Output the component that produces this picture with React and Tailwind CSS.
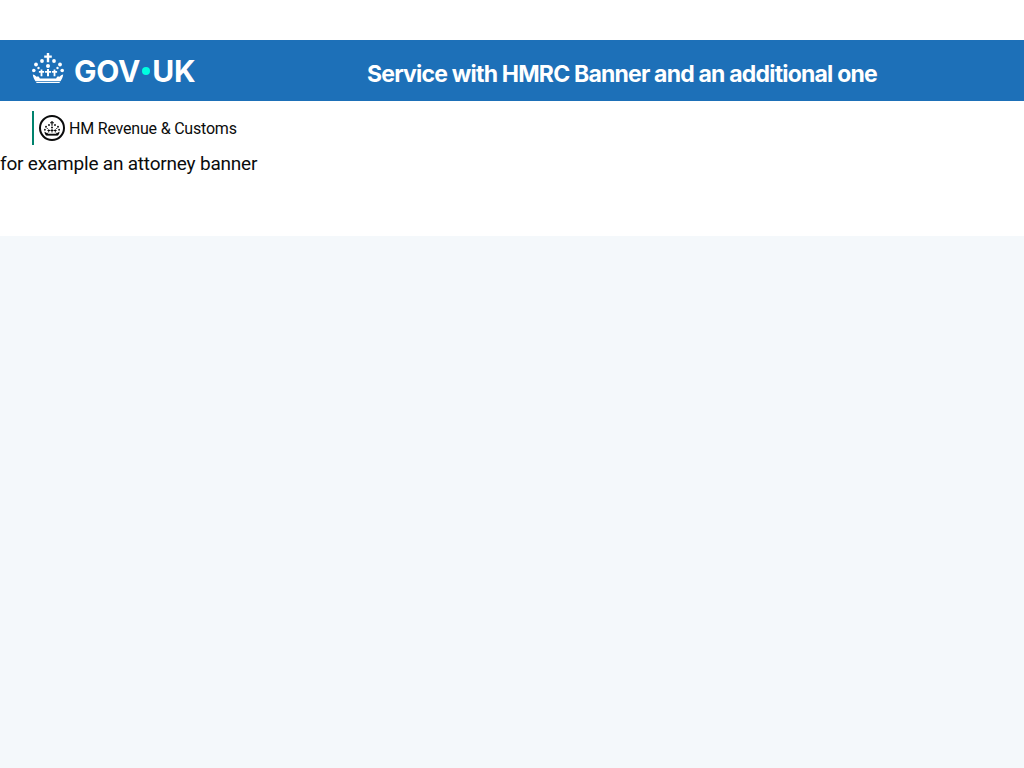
function Crown({ fill = "#fff", className }) {
  return (
    <svg viewBox="0 0 32 30" className={className} fill={fill} aria-hidden="true">
      <path d="M14.8 0h2.4v2.4h2.6v2.3h-2.6v4.6h-2.4V4.7h-2.6V2.4h2.6z" />
      <circle cx="16" cy="13" r="2" />
      <circle cx="10" cy="8" r="1.9" />
      <circle cx="22" cy="8" r="1.9" />
      <circle cx="4" cy="11.5" r="1.9" />
      <circle cx="28" cy="11.5" r="1.9" />
      <circle cx="1.8" cy="17.5" r="1.8" />
      <circle cx="30.2" cy="17.5" r="1.8" />
      <circle cx="6.5" cy="15" r="1.2" />
      <circle cx="25.5" cy="15" r="1.2" />
      <path d="M15 16h2v2h2v1.8h-2v3.4h-2v-3.4h-2V18h2z" />
      <path d="M8.6 16.5h1.8v1.6h1.7v1.7h-1.7v3.4H8.6v-3.4H6.9v-1.7h1.7z" />
      <path d="M21.6 16.5h1.8v1.6h1.7v1.7h-1.7v3.4h-1.8v-3.4h-1.7v-1.7h1.7z" />
      <path d="M0.8 21.5c1.4.2 2.8.9 3.6 2.3.8-.4 1.6-.6 2.5-.1l1 1.7h16.2l1-1.7c.9-.5 1.7-.3 2.5.1.8-1.4 2.2-2.1 3.6-2.3-.3 2.8-1.5 5-2.7 6.8H3.5C2.3 26.5 1.1 24.3.8 21.5z" />
      <path d="M4 28.9h24l-.6 1.1H4.6z" />
    </svg>
  );
}

export default function App() {
  return (
    <div className="min-h-[768px] bg-[#f4f8fb] font-['Roboto','Liberation_Sans',sans-serif] text-[#0b0c0c]">
      <div className="bg-white pt-10 h-[236px]">
        <header className="flex h-[61px] bg-[#1d70b8] text-white">
          <div className="flex w-[367px] shrink-0 items-center gap-2.5 pl-8">
            <Crown className="-mt-[5px] h-[30px] w-[32px] shrink-0" />
            <span className="flex items-center font-['Inter',sans-serif] text-[30px] leading-none font-bold tracking-[-0.2px]">
              GOV<span className="mx-[2px] inline-block size-2 rounded-full bg-[#00ffe0]"></span>UK
            </span>
          </div>
          <div className="flex items-center pt-[7px] font-['Inter',sans-serif] text-[23px] leading-none font-bold tracking-[-0.8px] whitespace-nowrap">
            Service with HMRC Banner and an additional one
          </div>
        </header>
        <div className="pt-2.5 pl-8">
          <div className="flex h-[34px] items-center border-l-2 border-[#00826d] pl-[5px]">
            <div className="flex size-[26px] shrink-0 items-center justify-center rounded-full border-2 border-[#0b0c0c]">
              <Crown fill="#0b0c0c" className="h-[15px] w-[16px]" />
            </div>
            <span className="ml-1 pt-px text-[16px] leading-none tracking-[-0.2px] whitespace-nowrap">HM Revenue &amp; Customs</span>
          </div>
        </div>
        <p className="mt-[6px] text-[19px] leading-[25px] tracking-[-0.2px]">for example an attorney banner</p>
      </div>
    </div>
  );
}
